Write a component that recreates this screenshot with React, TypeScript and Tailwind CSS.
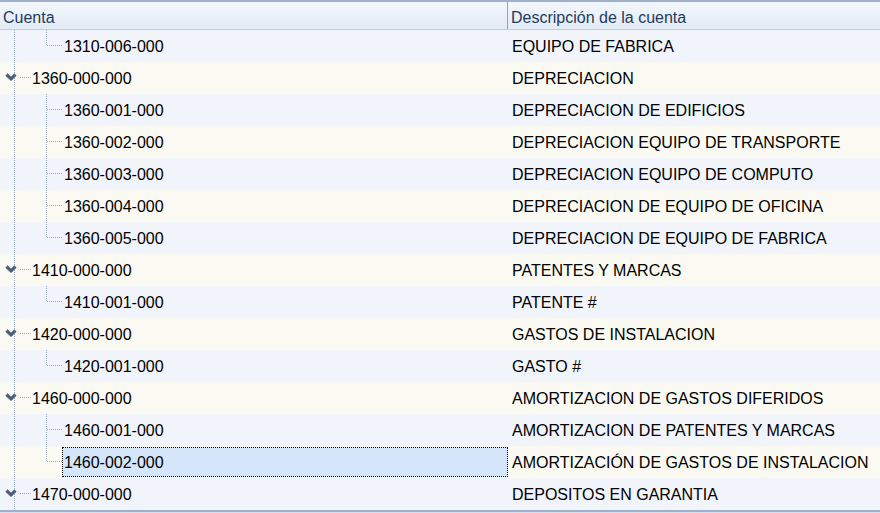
import React from "react";

type Row = { code: string; desc: string; level: 0 | 1; last?: boolean; selected?: boolean };

const rows: Row[] = [
  { code: "1310-006-000", desc: "EQUIPO DE FABRICA", level: 1, last: true },
  { code: "1360-000-000", desc: "DEPRECIACION", level: 0 },
  { code: "1360-001-000", desc: "DEPRECIACION DE EDIFICIOS", level: 1 },
  { code: "1360-002-000", desc: "DEPRECIACION EQUIPO DE TRANSPORTE", level: 1 },
  { code: "1360-003-000", desc: "DEPRECIACION EQUIPO DE COMPUTO", level: 1 },
  { code: "1360-004-000", desc: "DEPRECIACION DE EQUIPO DE OFICINA", level: 1 },
  { code: "1360-005-000", desc: "DEPRECIACION DE EQUIPO DE FABRICA", level: 1, last: true },
  { code: "1410-000-000", desc: "PATENTES Y MARCAS", level: 0 },
  { code: "1410-001-000", desc: "PATENTE #", level: 1, last: true },
  { code: "1420-000-000", desc: "GASTOS DE INSTALACION", level: 0 },
  { code: "1420-001-000", desc: "GASTO #", level: 1, last: true },
  { code: "1460-000-000", desc: "AMORTIZACION DE GASTOS DIFERIDOS", level: 0 },
  { code: "1460-001-000", desc: "AMORTIZACION DE PATENTES Y MARCAS", level: 1 },
  { code: "1460-002-000", desc: "AMORTIZACIÓN DE GASTOS DE INSTALACION", level: 1, last: true, selected: true },
  { code: "1470-000-000", desc: "DEPOSITOS EN GARANTIA", level: 0 },
];

const DOT = "#9cadc6";

function TreeLines({ row }: { row: Row }) {
  const w = row.level === 0 ? 32 : 62;
  return (
    <svg width={w} height={32} className="shrink-0" shapeRendering="crispEdges">
      <line x1={14.5} y1={0} x2={14.5} y2={32} stroke={DOT} strokeDasharray="1 1" />
      {row.level === 0 ? (
        <>
          <line x1={20} y1={15.5} x2={31} y2={15.5} stroke={DOT} strokeDasharray="1 1" />
          <polyline
            points="6.5,12.5 11,16.8 15.5,12.5"
            fill="none"
            stroke="#4f5d7a"
            strokeWidth={3.2}
            shapeRendering="geometricPrecision"
          />
        </>
      ) : (
        <>
          <line x1={46.5} y1={0} x2={46.5} y2={row.last ? 16 : 32} stroke={DOT} strokeDasharray="1 1" />
          <line x1={47} y1={15.5} x2={62} y2={15.5} stroke={DOT} strokeDasharray="1 1" />
        </>
      )}
    </svg>
  );
}

export default function App() {
  return (
    <div
      className="w-[880px] h-[513px] overflow-hidden bg-[#f1f4fa] text-[16px] text-black flex flex-col"
      style={{ fontFamily: '"Liberation Sans", Arial, sans-serif' }}
    >
      <div className="h-[2px] bg-[#9fb1ca] shrink-0" />
      <div className="h-[28px] shrink-0 flex bg-gradient-to-b from-[#f3f7fd] to-[#e3ebf6] border-b border-[#c3cfdf] text-[#1e3a5f]">
        <div className="w-[508px] pl-[3px] pt-[4px] border-r border-[#8ea2bd]">Cuenta</div>
        <div className="flex-1 pl-[3px] pt-[4px]">Descripción de la cuenta</div>
      </div>
      <div className="flex flex-col">
        {rows.map((r, i) => (
          <div
            key={r.code}
            className={`h-[32px] flex ${i % 2 === 0 ? "bg-[#f1f4fa]" : "bg-[#fafaf2]"}`}
          >
            <div className="w-[508px] flex items-stretch shrink-0">
              <TreeLines row={r} />
              {r.selected ? (
                <div className="flex-1 flex items-center my-[1px] pl-[1px] pt-[2px] bg-[#d5e6fb] border border-dotted border-black">
                  {r.code}
                </div>
              ) : (
                <div className={`flex-1 flex items-center pt-[2px] ${r.level === 0 ? "pl-0" : "pl-[2px]"}`}>
                  {r.code}
                </div>
              )}
            </div>
            <div className="flex-1 flex items-center pl-[4px] pt-[2px]">{r.desc}</div>
          </div>
        ))}
      </div>
      <div className="h-[2px] bg-[#9fb1ca] shrink-0" />
      <div className="flex-1 bg-[#d6e0ec]" />
    </div>
  );
}
